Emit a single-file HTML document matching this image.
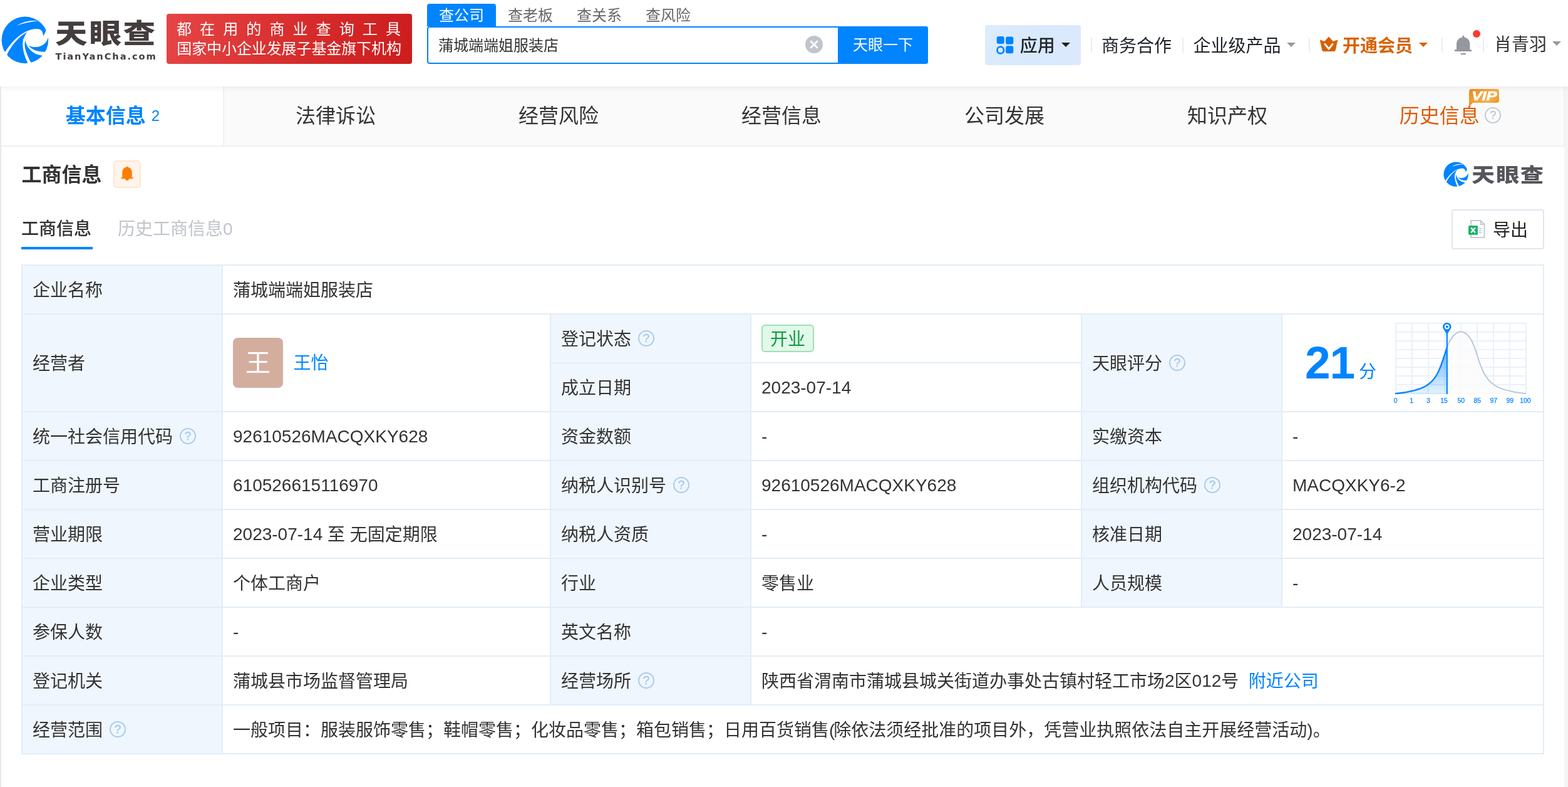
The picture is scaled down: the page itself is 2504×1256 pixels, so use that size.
<!DOCTYPE html>
<html lang="zh-CN">
<head>
<meta charset="utf-8">
<title>蒲城端端姐服装店 - 天眼查</title>
<style>
*{box-sizing:border-box;margin:0;padding:0}
html,body{width:2504px;height:1256px;overflow:hidden;background:#f4f4f4}
body{font-family:"Liberation Sans","Noto Sans CJK SC",sans-serif;color:#333;font-size:28px;-webkit-font-smoothing:antialiased}
#page{will-change:transform;position:relative;width:2504px;height:1256px;overflow:hidden;background:#f4f4f4}
.abs{position:absolute;white-space:nowrap}
svg{display:block;overflow:visible}

/* ---------- header ---------- */
#hd{position:absolute;left:0;top:0;width:2504px;height:138px;background:#fff;z-index:5;box-shadow:0 2px 9px rgba(0,0,0,.072)}
#logo-ic{position:absolute;left:0;top:20px}
#logo-t{position:absolute;left:87.5px;top:21.5px;font-size:43px;line-height:64px;font-weight:900;letter-spacing:2.2px;color:#443d3e;white-space:nowrap;transform:scaleX(1.2);transform-origin:0 0}
#logo-s{position:absolute;left:88.5px;top:79px;font-family:"DejaVu Sans","Liberation Sans",sans-serif;font-size:14.6px;line-height:22px;font-weight:700;letter-spacing:1.93px;color:#443d3e;white-space:nowrap}
#banner{position:absolute;left:266px;top:22px;width:392px;height:80px;border-radius:4px;background:linear-gradient(100deg,#e64545 0%,#d62a2a 60%,#cc1d1d 100%);color:#fff;font-size:24px;white-space:nowrap}
#banner .l1{position:absolute;left:16px;top:8.5px;line-height:32px;letter-spacing:13.1px}
#banner .l2{position:absolute;left:16.3px;top:40px;line-height:32px;letter-spacing:-0.1px}
.stab{position:absolute;top:6px;width:110px;height:36px;line-height:37px;text-align:center;font-size:24px;color:#666}
.stab.on{background:#0084ff;color:#fff;border-radius:4px 4px 0 0}
#sbox{position:absolute;left:682px;top:42px;width:800px;height:60px;border:2px solid #0084ff;border-radius:4px;background:#fff}

#sbox .clr{position:absolute;left:601.7px;top:12.5px;width:28px;height:28px}
#sbox .btn{position:absolute;right:-2px;top:-2px;width:144px;height:60px;background:#0084ff;color:#fff;font-size:24px;line-height:60px;text-align:center;border-radius:0 4px 4px 0}
#app{position:absolute;left:1573px;top:40px;width:153px;height:64px;border-radius:4px;background:linear-gradient(120deg,#dcecfe 0%,#d8e9fe 55%,#dde9fc 100%)}
.nv{position:absolute;top:54px;line-height:40px;font-size:28px;color:#1f2329;white-space:nowrap}
.dv{position:absolute;top:60px;width:2px;height:24px;background:#ebedf1}
.caret{position:absolute;width:0;height:0;border-left:7px solid transparent;border-right:7px solid transparent;border-top:7px solid #999}

/* ---------- card ---------- */
#card{position:absolute;left:2px;top:138px;width:2496px;height:1118px;background:#fff}
#edgeL{position:absolute;left:0;top:138px;width:2px;height:1118px;background:#e9e9e9}
#tabs{position:absolute;left:0;top:0;width:2496px;height:96px;background:linear-gradient(90deg,#fafafa 0,#fafafa 2492px,#fff 2492px,#fff 2494px,#f2f2f2 2494px);border-bottom:2px solid #f0f0f0}
.tab{position:absolute;top:0;width:356px;height:94px;line-height:95px;text-align:center;font-size:32px;color:#333;white-space:nowrap}
.tab.on{background:#fff;color:#0084ff;font-weight:700;width:354px;padding-left:2px;box-shadow:2px 0 0 #f0f0f0}
.tab.on small{font-size:24px;font-weight:400;margin-left:9px;position:relative;top:-3.5px}
.tab.vip{color:#e05a05}
#vip{position:absolute;left:208px;top:4px;width:48px;height:22px;border-radius:4px 4px 4px 0;background:linear-gradient(135deg,#e88d1a 0%,#f0a338 40%,#f3b04e 70%,#e99420 100%);line-height:22px;text-align:center}
#vip:after{content:"";position:absolute;left:0;top:21.5px;border-left:6.5px solid #e98f1c;border-bottom:6px solid transparent}
#vip i{position:absolute;left:3px;top:0;width:42px;text-align:center;font-family:"Liberation Sans",sans-serif;font-weight:700;font-style:italic;font-size:20px;line-height:22px;color:#fff;letter-spacing:-0.2px;transform:scaleX(1.27);-webkit-text-stroke:0.5px #fff}

/* ---------- section ---------- */
#ttl{position:absolute;left:34.6px;top:255px;font-size:32px;line-height:48px;font-weight:700;color:#333}
#bell{position:absolute;left:181px;top:256px;width:44px;height:44px;border:2px solid #ffe6d2;border-radius:5px;background:#fff4ea}
#wm-ic{position:absolute;left:2304.3px;top:255.2px}
#wm-t{position:absolute;left:2349.6px;top:254px;font-size:31px;line-height:52px;font-weight:900;letter-spacing:1.4px;color:#55565c;white-space:nowrap;transform:scaleX(1.2);transform-origin:0 0}
#st1{position:absolute;left:34px;top:342px;font-size:28px;line-height:48px;font-weight:500;color:#333}
#st1u{position:absolute;left:34px;top:394px;width:114px;height:4px;background:#0084ff}
#st2{position:absolute;left:188px;top:342px;font-size:28px;line-height:48px;color:#c0c4cc}
#exp{position:absolute;left:2318px;top:334px;width:148px;height:64px;border:2px solid #e1e6ee;border-radius:4px;background:#fff}
#exp span{position:absolute;left:64px;top:1px;line-height:62px;font-size:28px;color:#222}
#exp svg{position:absolute;left:24px;top:14px}

/* ---------- table ---------- */
#tb{position:absolute;left:34px;top:422px;width:2432px;border-collapse:collapse;table-layout:fixed;font-size:28px;color:#333}
#tb td{border:2px solid #e3edf6;height:78px;padding:3px 16px 0;vertical-align:middle;line-height:40px;white-space:nowrap;background:#fff}
#tb td.k{background:#eff6fd}
.q{-webkit-text-stroke:0.35px currentColor;display:inline-block;width:26px;height:26px;border:2px solid #aacdee;border-radius:50%;vertical-align:middle;margin-left:11px;position:relative;top:-3.5px;font-size:19px;line-height:22px;text-align:center;color:#a3c9ec;font-family:"Liberation Sans",sans-serif}
.q.g{border-color:#c3c9d1;color:#c3c9d1}
.tab .q{margin-left:8.5px;top:-4px;font-weight:400}
a{color:#0084ff;text-decoration:none}
.tag{position:relative;top:-2px;display:inline-block;height:44px;line-height:43px;padding:0 12px;border:2px solid #9edfb6;border-radius:6px;background:#e1f9e9;color:#0a9b3f;font-size:28px;vertical-align:middle}
.ava{position:relative;top:-2px;display:inline-block;width:80px;height:80px;border-radius:8px;background:#d3ae9f;color:#fff;font-size:40px;line-height:80px;text-align:center;vertical-align:middle;margin-right:17px}
#chart{position:absolute;left:2185px;top:83px}
#sc21{position:absolute;left:2049px;top:114px;font-family:"Liberation Sans",sans-serif;font-weight:700;font-size:73px;line-height:84px;color:#0084ff;letter-spacing:-1px;white-space:nowrap}
#scf{position:absolute;left:2135px;top:151px;font-size:28px;line-height:40px;color:#0084ff}
.n{position:relative;top:-1px}
</style>
</head>
<body>
<div id="page">
<div id="hd">
  <svg id="logo-ic" viewBox="0 0 1227 1256" width="84" height="86"><circle cx="583" cy="641" r="545" fill="#0084ff"/><g fill="#fff"><path d="M395,303 C540,215 720,170 895,198 C720,208 560,248 395,303 Z"/><path d="M640,432 C740,385 850,365 930,395 C985,420 1005,480 1008,548 C1040,500 1065,450 1076,400 L1250,400 L1250,600 L1122,580 C1100,690 1000,790 860,805 C790,812 720,798 662,768 C620,730 597,690 590,640 C575,700 570,750 575,800 L540,800 C525,720 535,600 640,432 Z"/><path d="M655,420 C420,520 240,720 112,932 L160,992 C260,770 420,580 640,445 Z"/><path d="M545,600 C510,780 545,980 655,1190 L725,1172 C640,1020 580,860 575,760 C570,700 580,660 592,640 Z"/><path d="M590,640 C600,760 680,880 830,965 C890,990 950,998 1030,1010 L1090,915 C900,930 760,880 662,768 Z"/></g></svg>
  <div id="logo-t">天眼查</div>
  <div id="logo-s">TianYanCha.com</div>
  <div id="banner"><div class="l1">都在用的商业查询工具</div><div class="l2">国家中小企业发展子基金旗下机构</div></div>
  <div class="stab on" style="left:682px">查公司</div>
  <div class="stab" style="left:792px">查老板</div>
  <div class="stab" style="left:902px">查关系</div>
  <div class="stab" style="left:1012px">查风险</div>
  <div id="sbox"><div class="abs" style="left:16px;top:1.3px;line-height:56px;font-size:24px;color:#333">蒲城端端姐服装店</div><svg class="clr" viewBox="0 0 28 28" width="28" height="28"><circle cx="14" cy="14" r="14" fill="#c0c4cc"/><path d="M9,9 L19,19 M19,9 L9,19" stroke="#fff" stroke-width="2.6" stroke-linecap="round"/></svg><div class="btn">天眼一下</div></div>
  <div id="app"></div>
  <svg class="abs" style="left:1590px;top:57px" width="30" height="30" viewBox="0 0 30 30"><rect x="1.7" y="1" width="12" height="12" rx="3.2" fill="#0084ff"/><rect x="16.1" y="1.6" width="12.2" height="12.2" rx="3.2" fill="#0084ff"/><rect x="16.1" y="16.3" width="12.2" height="12" rx="3.2" fill="#0084ff"/><circle cx="7.7" cy="23" r="5.3" fill="none" stroke="#0084ff" stroke-width="2.8"/></svg>
  <div class="nv" style="left:1628.8px;font-weight:500;color:#20252c">应用</div>
  <div class="caret" style="left:1695px;top:68px;border-top-color:#222"></div>
  <div class="dv" style="left:1742px"></div>
  <div class="nv" style="left:1759px">商务合作</div>
  <div class="dv" style="left:1888px"></div>
  <div class="nv" style="left:1905.5px">企业级产品</div>
  <div class="caret" style="left:2055px;top:68px"></div>
  <div class="dv" style="left:2090px"></div>
  <svg class="abs" style="left:2106px;top:57px" width="32" height="27" viewBox="0 0 32 27"><path d="M2.2,7 L9.2,9.4 L16,1.9 L22.8,9.4 L29.8,7 L26.3,23.2 Q26,24.7 24.4,24.7 L7.6,24.7 Q6,24.7 5.7,23.2 Z" fill="#d65f00" stroke="#d65f00" stroke-width="0.8" stroke-linejoin="round"/><path d="M9.9,13.3 L16,21 L22.1,13.3" fill="none" stroke="#fff" stroke-width="2.9" stroke-linecap="round" stroke-linejoin="round"/></svg>
  <div class="nv" style="left:2144px;color:#d96200;font-weight:700">开通会员</div>
  <div class="caret" style="left:2266px;top:68px;border-top-color:#d96200"></div>
  <div class="dv" style="left:2302px"></div>
  <svg class="abs" style="left:2322px;top:55px" width="30" height="34" viewBox="0 0 30 34"><path d="M13.4,3 Q13.4,1.5 14.9,1.5 Q16.4,1.5 16.4,3 L16.4,4.4 C21.6,5.2 25.3,9.6 25.3,15 L25.3,24.2 L28,24.2 L28,27 L1,27 L1,24.2 L4,24.2 L4,15 C4,9.6 7.9,5.2 13.4,4.4 Z" fill="#94979d"/><rect x="10.8" y="30" width="8.2" height="2.2" rx="0.6" fill="#94979d"/></svg><div class="abs" style="left:2352px;top:48px;width:12.4px;height:12.4px;border-radius:50%;background:#ff3a2f"></div>
  <div class="dv" style="left:2368px"></div>
  <div class="nv" style="left:2386px;top:52px;color:#333">肖青羽</div>
  <div class="caret" style="left:2479px;top:66px"></div>
</div>

<div id="edgeL"></div>
<div id="card">
  <div id="tabs">
    <div class="tab on" style="left:0">基本信息<small>2</small></div>
    <div class="tab" style="left:356px">法律诉讼</div>
    <div class="tab" style="left:712px">经营风险</div>
    <div class="tab" style="left:1068px">经营信息</div>
    <div class="tab" style="left:1424px">公司发展</div>
    <div class="tab" style="left:1780px">知识产权</div>
    <div class="tab vip" style="left:2136px;width:356px">历史信息<span class="q g">?</span><div id="vip"><i>VIP</i></div></div>
  </div>
</div>

<div id="ttl">工商信息</div>
<div id="bell"><svg style="position:absolute;left:7.6px;top:7.3px" width="24" height="26" viewBox="0 0 24 26"><path d="M12,0.6 Q13.2,0.6 13.4,1.8 C17.2,2.6 19.7,5.8 19.7,9.8 L19.7,18.2 L21.6,18.2 L21.6,20.2 L15.2,20.2 Q14.6,23.2 12,23.2 Q9.4,23.2 8.8,20.2 L2.4,20.2 L2.4,18.2 L4.3,18.2 L4.3,9.8 C4.3,5.8 6.8,2.6 10.6,1.8 Q10.8,0.6 12,0.6 Z" fill="#ff7d00"/></svg></div>
<svg id="wm-ic" viewBox="0 0 1227 1256" width="44.35" height="45.4"><circle cx="583" cy="641" r="545" fill="#0084ff"/><g fill="#fff"><path d="M395,303 C540,215 720,170 895,198 C720,208 560,248 395,303 Z"/><path d="M640,432 C740,385 850,365 930,395 C985,420 1005,480 1008,548 C1040,500 1065,450 1076,400 L1250,400 L1250,600 L1122,580 C1100,690 1000,790 860,805 C790,812 720,798 662,768 C620,730 597,690 590,640 C575,700 570,750 575,800 L540,800 C525,720 535,600 640,432 Z"/><path d="M655,420 C420,520 240,720 112,932 L160,992 C260,770 420,580 640,445 Z"/><path d="M545,600 C510,780 545,980 655,1190 L725,1172 C640,1020 580,860 575,760 C570,700 580,660 592,640 Z"/><path d="M590,640 C600,760 680,880 830,965 C890,990 950,998 1030,1010 L1090,915 C900,930 760,880 662,768 Z"/></g></svg>
<div id="wm-t">天眼查</div>
<div id="st1">工商信息</div><div id="st1u"></div>
<div id="st2">历史工商信息0</div>
<div id="exp"><svg width="30" height="32" viewBox="0 0 30 32"><path d="M5,2 L20.5,2 L26.5,8 L26.5,29 L5,29 Z" fill="#fff" stroke="#c6cad3" stroke-width="2" stroke-linejoin="round"/><path d="M20.5,2 L20.5,8 L26.5,8" fill="none" stroke="#c6cad3" stroke-width="2" stroke-linejoin="round"/><path d="M17.5,14.6 h5 M17.5,18 h5 M17.5,21.4 h5" stroke="#c6cad3" stroke-width="1.6"/><rect x="1" y="10" width="15" height="14.8" rx="1.6" fill="#1bb36b"/><path d="M5.2,13.6 L11.8,21.2 M11.8,13.6 L5.2,21.2" stroke="#fff" stroke-width="2.3"/></svg><span>导出</span></div>

<table id="tb">
<colgroup><col style="width:320px"><col style="width:524px"><col style="width:320px"><col style="width:528px"><col style="width:320px"><col style="width:418px"></colgroup>
<tr><td class="k">企业名称</td><td colspan="5">蒲城端端姐服装店</td></tr>
<tr><td class="k" rowspan="2">经营者</td><td rowspan="2"><span class="ava">王</span><a style="position:relative;top:1.6px;left:-0.5px">王怡</a></td><td class="k">登记状态<span class="q">?</span></td><td><span class="tag">开业</span></td><td class="k" rowspan="2">天眼评分<span class="q">?</span></td><td rowspan="2" id="score"><div id="sc21">21</div><div id="scf">分</div><svg id="chart" width="230" height="144" viewBox="0 0 230 144"><defs><linearGradient id="bg1" x1="0" y1="0" x2="0" y2="1"><stop offset="0" stop-color="#0084ff" stop-opacity=".6"/><stop offset=".35" stop-color="#0084ff" stop-opacity=".42"/><stop offset="1" stop-color="#0084ff" stop-opacity=".1"/></linearGradient></defs><path d="M9,9 V123 M35,9 V123 M61,9 V123 M87,9 V123 M113,9 V123 M139,9 V123 M165,9 V123 M191,9 V123 M217,9 V123 M8,10 H218 M8,24 H218 M8,38 H218 M8,52 H218 M8,66 H218 M8,80 H218 M8,94 H218 M8,108 H218 M8,122 H218" stroke="#e9f1fb" stroke-width="2" fill="none"/><path d="M90.8,48.6 L92.6,44.0 L94.4,40.0 L96.2,36.5 L98.0,33.6 L99.8,31.1 L101.6,29.1 L103.5,27.4 L105.3,26.0 L107.1,24.9 L108.9,24.2 L110.7,23.7 L112.5,23.5 L114.3,23.6 L116.1,24.0 L117.9,24.6 L119.7,25.6 L121.5,26.9 L123.3,28.4 L125.1,30.4 L126.9,32.7 L128.8,35.5 L130.6,38.7 L132.4,42.5 L134.2,46.9 L136.0,52.0 L137.8,57.4 L139.6,63.0 L141.4,68.6 L143.2,73.8 L145.0,78.7 L146.8,83.1 L148.6,87.2 L150.4,90.6 L152.2,93.7 L154.1,96.3 L155.9,98.8 L157.7,101.0 L159.5,103.0 L161.3,104.6 L163.1,106.1 L164.9,107.5 L166.7,108.8 L168.5,109.9 L170.3,110.9 L172.1,111.8 L173.9,112.7 L175.7,113.4 L177.5,114.1 L179.4,114.8 L181.2,115.4 L183.0,115.9 L184.8,116.4 L186.6,116.9 L188.4,117.4 L190.2,117.8 L192.0,118.2 L193.8,118.6 L195.6,119.0 L197.4,119.4 L199.2,119.7 L201.0,120.0 L202.8,120.3 L204.7,120.6 L206.5,120.8 L208.3,121.1 L210.1,121.3 L211.9,121.5 L213.7,121.7 L215.5,121.9 L217.3,122.0 L217.3,123.0 L90.8,123.0 Z" fill="#fbfbfb" fill-opacity=".85"/><path d="M90.8,48.6 L92.6,44.0 L94.4,40.0 L96.2,36.5 L98.0,33.6 L99.8,31.1 L101.6,29.1 L103.5,27.4 L105.3,26.0 L107.1,24.9 L108.9,24.2 L110.7,23.7 L112.5,23.5 L114.3,23.6 L116.1,24.0 L117.9,24.6 L119.7,25.6 L121.5,26.9 L123.3,28.4 L125.1,30.4 L126.9,32.7 L128.8,35.5 L130.6,38.7 L132.4,42.5 L134.2,46.9 L136.0,52.0 L137.8,57.4 L139.6,63.0 L141.4,68.6 L143.2,73.8 L145.0,78.7 L146.8,83.1 L148.6,87.2 L150.4,90.6 L152.2,93.7 L154.1,96.3 L155.9,98.8 L157.7,101.0 L159.5,103.0 L161.3,104.6 L163.1,106.1 L164.9,107.5 L166.7,108.8 L168.5,109.9 L170.3,110.9 L172.1,111.8 L173.9,112.7 L175.7,113.4 L177.5,114.1 L179.4,114.8 L181.2,115.4 L183.0,115.9 L184.8,116.4 L186.6,116.9 L188.4,117.4 L190.2,117.8 L192.0,118.2 L193.8,118.6 L195.6,119.0 L197.4,119.4 L199.2,119.7 L201.0,120.0 L202.8,120.3 L204.7,120.6 L206.5,120.8 L208.3,121.1 L210.1,121.3 L211.9,121.5 L213.7,121.7 L215.5,121.9 L217.3,122.0" fill="none" stroke="#b8c9da" stroke-width="2"/><path d="M8.3,122.0 L10.2,121.9 L12.1,121.7 L13.9,121.5 L15.8,121.3 L17.7,121.0 L19.6,120.8 L21.4,120.5 L23.3,120.3 L25.2,119.9 L27.1,119.6 L28.9,119.2 L30.8,118.8 L32.7,118.4 L34.6,118.0 L36.4,117.6 L38.3,117.1 L40.2,116.6 L42.1,116.1 L43.9,115.5 L45.8,114.9 L47.7,114.3 L49.6,113.5 L51.4,112.8 L53.3,111.9 L55.2,111.0 L57.1,110.0 L58.9,108.8 L60.8,107.4 L62.7,106.0 L64.6,104.4 L66.4,102.7 L68.3,100.6 L70.2,98.2 L72.1,95.6 L73.9,92.8 L75.8,89.5 L77.7,85.6 L79.6,81.2 L81.4,76.5 L83.3,71.2 L85.2,65.6 L87.1,59.8 L88.9,54.1 L90.8,48.6 L90.8,123.0 L8.3,123.0 Z" fill="url(#bg1)"/><path d="M8,122.0 L8.3,122.0 L10.2,121.9 L12.1,121.7 L13.9,121.5 L15.8,121.3 L17.7,121.0 L19.6,120.8 L21.4,120.5 L23.3,120.3 L25.2,119.9 L27.1,119.6 L28.9,119.2 L30.8,118.8 L32.7,118.4 L34.6,118.0 L36.4,117.6 L38.3,117.1 L40.2,116.6 L42.1,116.1 L43.9,115.5 L45.8,114.9 L47.7,114.3 L49.6,113.5 L51.4,112.8 L53.3,111.9 L55.2,111.0 L57.1,110.0 L58.9,108.8 L60.8,107.4 L62.7,106.0 L64.6,104.4 L66.4,102.7 L68.3,100.6 L70.2,98.2 L72.1,95.6 L73.9,92.8 L75.8,89.5 L77.7,85.6 L79.6,81.2 L81.4,76.5 L83.3,71.2 L85.2,65.6 L87.1,59.8 L88.9,54.1 L90.8,48.6" fill="none" stroke="#0084ff" stroke-width="2.4" stroke-linejoin="round"/><path d="M90.8,26 V123.0" stroke="#0084ff" stroke-width="2.2"/><path d="M90.8,27.9 L85.1,18.8 A6.6,6.6 0 1 1 96.5,18.8 Z" fill="#0084ff"/><circle cx="90.8" cy="15.5" r="3.9" fill="#fff"/><circle cx="90.8" cy="15.5" r="1.9" fill="#0084ff"/><g font-family="Liberation Sans, sans-serif" font-size="10.4" fill="#0084ff" stroke="#0084ff" stroke-width=".25" text-anchor="middle"><text x="8.6" y="136.6">0</text><text x="34.1" y="136.6">1</text><text x="60.9" y="136.6">3</text><text x="86.0" y="136.6">15</text><text x="113.2" y="136.6">50</text><text x="139.3" y="136.6">85</text><text x="165.3" y="136.6">97</text><text x="191.2" y="136.6">99</text><text x="215.8" y="136.6">100</text></g></svg></td></tr>
<tr><td class="k">成立日期</td><td><span class="n">2023-07-14</span></td></tr>
<tr><td class="k">统一社会信用代码<span class="q">?</span></td><td><span class="n">92610526MACQXKY628</span></td><td class="k">资金数额</td><td><span class="n">-</span></td><td class="k">实缴资本</td><td><span class="n">-</span></td></tr>
<tr><td class="k">工商注册号</td><td><span class="n">610526615116970</span></td><td class="k">纳税人识别号<span class="q">?</span></td><td><span class="n">92610526MACQXKY628</span></td><td class="k">组织机构代码<span class="q">?</span></td><td><span class="n">MACQXKY6-2</span></td></tr>
<tr><td class="k">营业期限</td><td><span class="n">2023-07-14</span> 至 无固定期限</td><td class="k">纳税人资质</td><td><span class="n">-</span></td><td class="k">核准日期</td><td><span class="n">2023-07-14</span></td></tr>
<tr><td class="k">企业类型</td><td>个体工商户</td><td class="k">行业</td><td>零售业</td><td class="k">人员规模</td><td><span class="n">-</span></td></tr>
<tr><td class="k">参保人数</td><td><span class="n">-</span></td><td class="k">英文名称</td><td colspan="3"><span class="n">-</span></td></tr>
<tr><td class="k">登记机关</td><td>蒲城县市场监督管理局</td><td class="k">经营场所<span class="q">?</span></td><td colspan="3">陕西省渭南市蒲城县城关街道办事处古镇村轻工市场<span class="n">2</span>区<span class="n">012</span>号<a style="margin-left:15.5px">附近公司</a></td></tr>
<tr><td class="k">经营范围<span class="q">?</span></td><td colspan="5">一般项目：服装服饰零售；鞋帽零售；化妆品零售；箱包销售；日用百货销售<span style="letter-spacing:-2px">(</span>除依法须经批准的项目外，凭营业执照依法自主开展经营活动)。</td></tr>
</table>



</div>
</body>
</html>
